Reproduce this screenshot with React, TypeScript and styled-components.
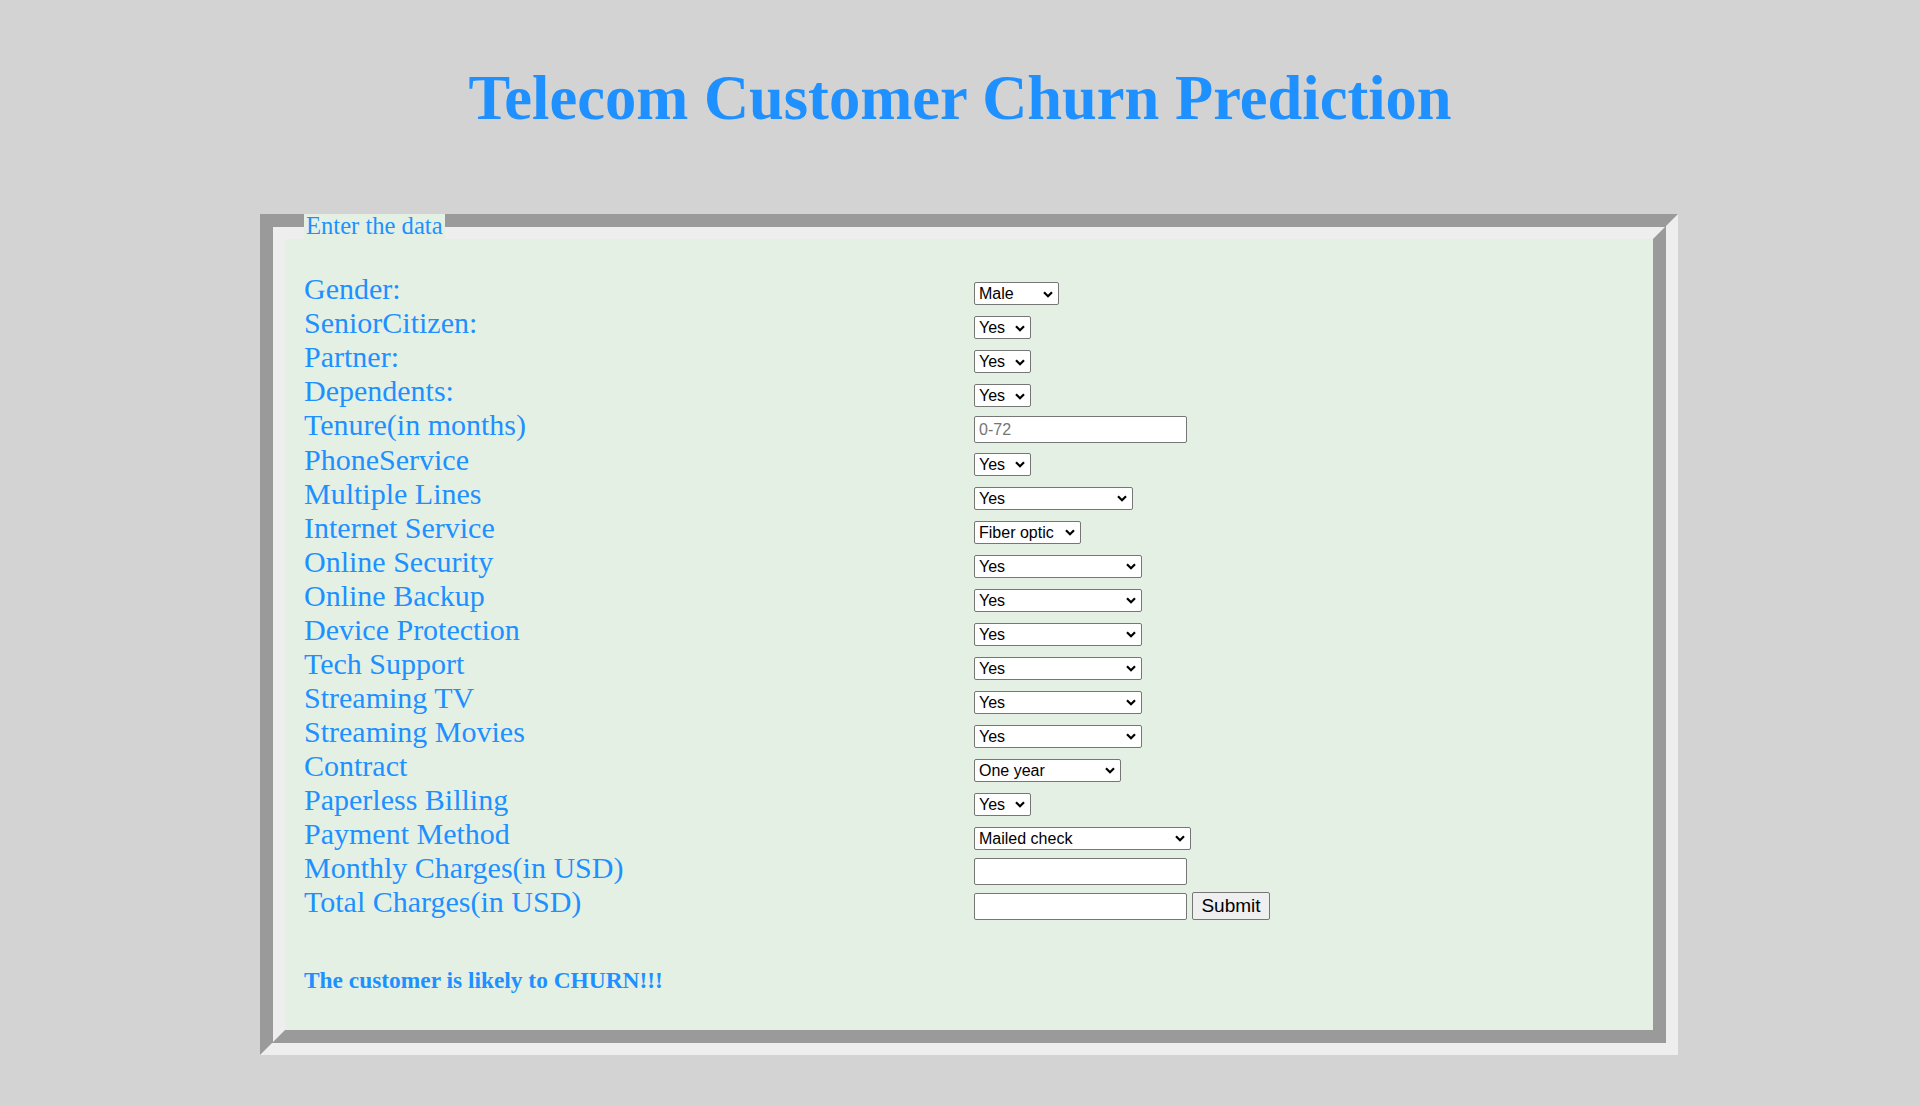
import React from "react";
import styled, { createGlobalStyle } from "styled-components";

const GlobalStyle = createGlobalStyle`
  html, body {
    margin: 0;
    padding: 0;
    background: #d3d3d3;
    font-family: "Liberation Serif", "Times New Roman", serif;
  }
`;

const Page = styled.div`
  box-sizing: border-box;
  min-height: 1105px;
  padding-top: 62px;
`;

const Title = styled.h1`
  margin: 0 0 77px;
  text-align: center;
  font-family: "Liberation Serif", "Times New Roman", serif;
  font-weight: 700;
  font-size: 62.5px;
  line-height: normal;
  color: #1e90ff;
`;

const Panel = styled.fieldset`
  box-sizing: border-box;
  width: 1418px;
  margin: 0 0 0 260px;
  padding: 32px 19px 36px;
  border: 25px groove #eeeeee;
  background: #e4f0e4;
  min-inline-size: 0;
`;

const Legend = styled.legend`
  padding: 0 2px;
  font-size: 24.6px;
  line-height: normal;
  color: #1e90ff;
`;

const FormGrid = styled.form`
  display: grid;
  grid-template-columns: 670px 1fr;
  align-items: baseline;
`;

const Label = styled.label`
  font-size: 30px;
  line-height: normal;
  color: #1e90ff;
`;

const Field = styled.div`
  display: flex;
  align-items: baseline;
  gap: 5px;
`;

const SelectWrap = styled.span`
  position: relative;
  display: inline-flex;
`;

const Select = styled.select<{ $w: number }>`
  appearance: none;
  -webkit-appearance: none;
  box-sizing: border-box;
  width: ${(p) => p.$w}px;
  height: 23px;
  margin: 0;
  padding: 0 20px 0 4px;
  border: 1px solid #767676;
  border-radius: 2px;
  background: #ffffff;
  color: #000000;
  font-family: "Liberation Sans", Arial, sans-serif;
  font-size: 16px;
  line-height: normal;
`;

const Chevron = styled.svg`
  position: absolute;
  right: 6px;
  top: 50%;
  width: 10px;
  height: 7px;
  margin-top: -3px;
  pointer-events: none;
`;

const TextInput = styled.input`
  box-sizing: border-box;
  width: 213px;
  height: 27px;
  margin: 0;
  padding: 2px 4px 0;
  border: 1px solid #767676;
  border-radius: 2px;
  background: #ffffff;
  font-family: "Liberation Sans", Arial, sans-serif;
  font-size: 16px;
  line-height: normal;

  &::placeholder {
    color: #757575;
  }
`;

const SubmitButton = styled.button`
  box-sizing: border-box;
  width: 78px;
  height: 28px;
  margin: 0;
  padding: 0;
  border: 1px solid #767676;
  border-radius: 2px;
  background: #efefef;
  color: #000000;
  font-family: "Liberation Sans", Arial, sans-serif;
  font-size: 19px;
  line-height: normal;
`;

const Result = styled.h3`
  margin: 47px 0 0;
  font-size: 23.4px;
  font-weight: 700;
  line-height: normal;
  color: #1e90ff;
`;

type SelectRow = { kind: "select"; label: string; name: string; options: string[]; value: string; w: number };
type InputRow = { kind: "input"; label: string; name: string; placeholder?: string; submit?: boolean };
type Row = SelectRow | InputRow;

const yesNo = ["Yes", "No"];
const internetOpts = ["Yes", "No", "No internet service"];

const rows: Row[] = [
  { kind: "select", label: "Gender:", name: "gender", options: ["Male", "Female"], value: "Male", w: 85 },
  { kind: "select", label: "SeniorCitizen:", name: "SeniorCitizen", options: yesNo, value: "Yes", w: 57 },
  { kind: "select", label: "Partner:", name: "Partner", options: yesNo, value: "Yes", w: 57 },
  { kind: "select", label: "Dependents:", name: "Dependents", options: yesNo, value: "Yes", w: 57 },
  { kind: "input", label: "Tenure(in months)", name: "tenure", placeholder: "0-72" },
  { kind: "select", label: "PhoneService", name: "PhoneService", options: yesNo, value: "Yes", w: 57 },
  { kind: "select", label: "Multiple Lines", name: "MultipleLines", options: ["Yes", "No", "No phone service"], value: "Yes", w: 159 },
  { kind: "select", label: "Internet Service", name: "InternetService", options: ["DSL", "Fiber optic", "No"], value: "Fiber optic", w: 107 },
  { kind: "select", label: "Online Security", name: "OnlineSecurity", options: internetOpts, value: "Yes", w: 168 },
  { kind: "select", label: "Online Backup", name: "OnlineBackup", options: internetOpts, value: "Yes", w: 168 },
  { kind: "select", label: "Device Protection", name: "DeviceProtection", options: internetOpts, value: "Yes", w: 168 },
  { kind: "select", label: "Tech Support", name: "TechSupport", options: internetOpts, value: "Yes", w: 168 },
  { kind: "select", label: "Streaming TV", name: "StreamingTV", options: internetOpts, value: "Yes", w: 168 },
  { kind: "select", label: "Streaming Movies", name: "StreamingMovies", options: internetOpts, value: "Yes", w: 168 },
  { kind: "select", label: "Contract", name: "Contract", options: ["Month-to-month", "One year", "Two year"], value: "One year", w: 147 },
  { kind: "select", label: "Paperless Billing", name: "PaperlessBilling", options: yesNo, value: "Yes", w: 57 },
  {
    kind: "select",
    label: "Payment Method",
    name: "PaymentMethod",
    options: ["Electronic check", "Mailed check", "Bank transfer (automatic)", "Credit card (automatic)"],
    value: "Mailed check",
    w: 217,
  },
  { kind: "input", label: "Monthly Charges(in USD)", name: "MonthlyCharges" },
  { kind: "input", label: "Total Charges(in USD)", name: "TotalCharges", submit: true },
];

export default function App() {
  return (
    <>
      <GlobalStyle />
      <Page>
        <Title>Telecom Customer Churn Prediction</Title>
        <Panel>
          <Legend>Enter the data</Legend>
          <FormGrid onSubmit={(e) => e.preventDefault()}>
            {rows.map((r) => (
              <React.Fragment key={r.name}>
                <Label htmlFor={r.name}>{r.label}</Label>
                <Field>
                  {r.kind === "select" ? (
                    <SelectWrap>
                      <Select id={r.name} name={r.name} defaultValue={r.value} $w={r.w}>
                        {r.options.map((o) => (
                          <option key={o} value={o}>
                            {o}
                          </option>
                        ))}
                      </Select>
                      <Chevron viewBox="0 0 10 7" aria-hidden="true">
                        <path d="M1 1.2 L5 5.2 L9 1.2" fill="none" stroke="#000" strokeWidth="2.2" />
                      </Chevron>
                    </SelectWrap>
                  ) : (
                    <>
                      <TextInput id={r.name} name={r.name} type="text" placeholder={r.placeholder} />
                      {r.submit && <SubmitButton type="submit">Submit</SubmitButton>}
                    </>
                  )}
                </Field>
              </React.Fragment>
            ))}
          </FormGrid>
          <Result>The customer is likely to CHURN!!!</Result>
        </Panel>
      </Page>
    </>
  );
}
